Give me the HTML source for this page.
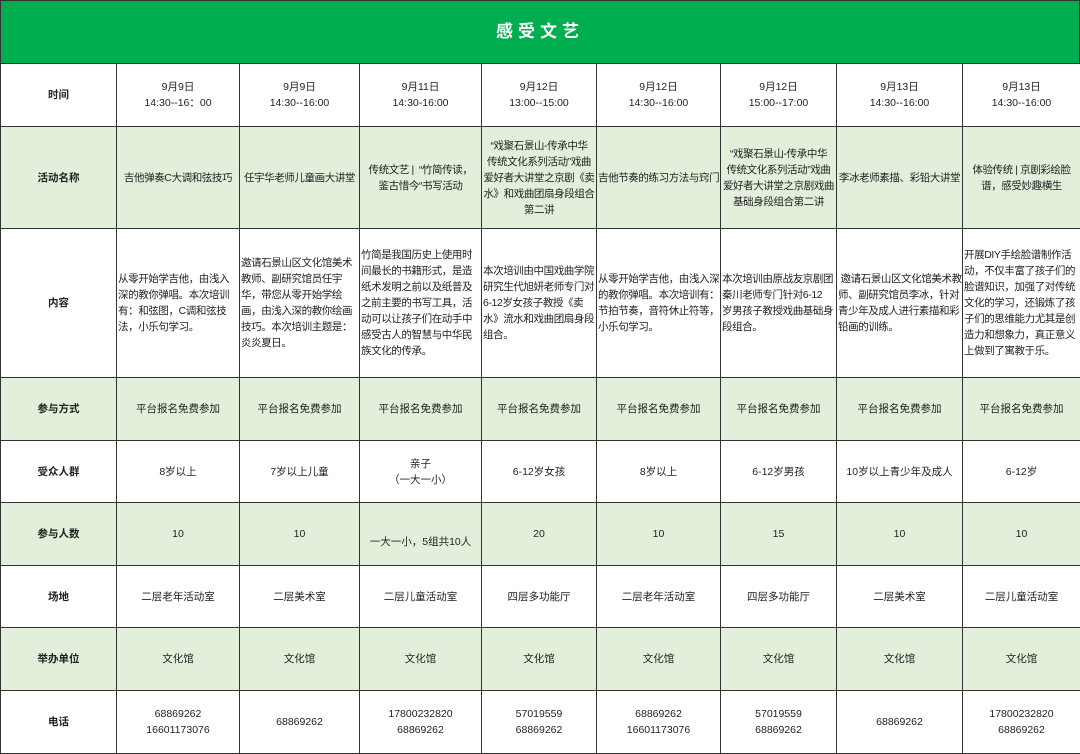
<!DOCTYPE html>
<html><head><meta charset="utf-8"><style>
*{margin:0;padding:0;box-sizing:border-box}
body{width:1080px;height:753px;overflow:hidden;background:#fff;font-family:"Liberation Sans","Noto Sans CJK SC",sans-serif;color:#222}
.hd{position:absolute;left:0;top:0;width:1080px;height:64px;background:#00ad4f;border:1px solid #333;color:#fff;font-weight:bold;font-size:17px;letter-spacing:5px;text-align:center;line-height:62px}
table{position:absolute;left:0;top:63px;border-collapse:collapse;table-layout:fixed;width:1080px}
td{border:1px solid #333;font-size:10.5px;line-height:16px;text-align:center;vertical-align:middle;white-space:nowrap;overflow:hidden;padding:0 1px}
td.h{font-weight:bold}
tr.g td{background:#e2efda}
td.l{text-align:left;letter-spacing:-0.4px}
td.n{letter-spacing:-0.4px}
</style></head><body>
<div class="hd">感受文艺</div>
<table>
<colgroup><col style="width:116px"><col style="width:123px"><col style="width:120px"><col style="width:122px"><col style="width:115px"><col style="width:124px"><col style="width:116px"><col style="width:126px"><col style="width:118px"></colgroup>
<tr style="height:63px"><td class="h">时间</td><td>9月9日<br>14:30--16：00</td><td>9月9日<br>14:30--16:00</td><td>9月11日<br>14:30-16:00</td><td>9月12日<br>13:00--15:00</td><td>9月12日<br>14:30--16:00</td><td>9月12日<br>15:00--17:00</td><td>9月13日<br>14:30--16:00</td><td>9月13日<br>14:30--16:00</td></tr>
<tr class="g" style="height:102px"><td class="h">活动名称</td><td class="n">吉他弹奏C大调和弦技巧</td><td class="n">任宇华老师儿童画大讲堂</td><td class="n">传统文艺 |&nbsp; “竹简传读，<br>鉴古惜今“书写活动</td><td class="n">“戏聚石景山-传承中华<br>传统文化系列活动”戏曲<br>爱好者大讲堂之京剧《卖<br>水》和戏曲团扇身段组合<br>第二讲</td><td class="n">吉他节奏的练习方法与窍门</td><td class="n">“戏聚石景山-传承中华<br>传统文化系列活动”戏曲<br>爱好者大讲堂之京剧戏曲<br>基础身段组合第二讲</td><td class="n">李冰老师素描、彩铅大讲堂</td><td class="n">体验传统 | 京剧彩绘脸<br>谱，感受妙趣横生</td></tr>
<tr style="height:149px"><td class="h">内容</td><td class="l">从零开始学吉他，由浅入<br>深的教你弹唱。本次培训<br>有：和弦图，C调和弦技<br>法，小乐句学习。</td><td class="l">邀请石景山区文化馆美术<br>教师、副研究馆员任宇<br>华，带您从零开始学绘<br>画，由浅入深的教你绘画<br>技巧。本次培训主题是：<br>炎炎夏日。</td><td class="l">竹简是我国历史上使用时<br>间最长的书籍形式，是造<br>纸术发明之前以及纸普及<br>之前主要的书写工具，活<br>动可以让孩子们在动手中<br>感受古人的智慧与中华民<br>族文化的传承。</td><td class="l">本次培训由中国戏曲学院<br>研究生代旭妍老师专门对<br>6-12岁女孩子教授《卖<br>水》流水和戏曲团扇身段<br>组合。</td><td class="l">从零开始学吉他，由浅入深<br>的教你弹唱。本次培训有：<br>节拍节奏，音符休止符等，<br>小乐句学习。</td><td class="l">本次培训由原战友京剧团<br>秦川老师专门针对6-12<br>岁男孩子教授戏曲基础身<br>段组合。</td><td class="l">&nbsp;邀请石景山区文化馆美术教<br>师、副研究馆员李冰，针对<br>青少年及成人进行素描和彩<br>铅画的训练。</td><td class="l">开展DIY手绘脸谱制作活<br>动，不仅丰富了孩子们的<br>脸谱知识，加强了对传统<br>文化的学习，还锻炼了孩<br>子们的思维能力尤其是创<br>造力和想象力，真正意义<br>上做到了寓教于乐。</td></tr>
<tr class="g" style="height:63px"><td class="h">参与方式</td><td>平台报名免费参加</td><td>平台报名免费参加</td><td>平台报名免费参加</td><td>平台报名免费参加</td><td>平台报名免费参加</td><td>平台报名免费参加</td><td>平台报名免费参加</td><td>平台报名免费参加</td></tr>
<tr style="height:62px"><td class="h">受众人群</td><td>8岁以上</td><td>7岁以上儿童</td><td>亲子<br>（一大一小）</td><td>6-12岁女孩</td><td>8岁以上</td><td>6-12岁男孩</td><td>10岁以上青少年及成人</td><td>6-12岁</td></tr>
<tr class="g" style="height:63px"><td class="h">参与人数</td><td>10</td><td>10</td><td style="padding-top:16px">一大一小，5组共10人</td><td>20</td><td>10</td><td>15</td><td>10</td><td>10</td></tr>
<tr style="height:62px"><td class="h">场地</td><td>二层老年活动室</td><td>二层美术室</td><td>二层儿童活动室</td><td>四层多功能厅</td><td>二层老年活动室</td><td>四层多功能厅</td><td>二层美术室</td><td>二层儿童活动室</td></tr>
<tr class="g" style="height:63px"><td class="h">举办单位</td><td>文化馆</td><td>文化馆</td><td>文化馆</td><td>文化馆</td><td>文化馆</td><td>文化馆</td><td>文化馆</td><td>文化馆</td></tr>
<tr style="height:63px"><td class="h">电话</td><td>68869262<br>16601173076</td><td>68869262</td><td>17800232820<br>68869262</td><td>57019559<br>68869262</td><td>68869262<br>16601173076</td><td>57019559<br>68869262</td><td>68869262</td><td>17800232820<br>68869262</td></tr>
</table>
</body></html>
